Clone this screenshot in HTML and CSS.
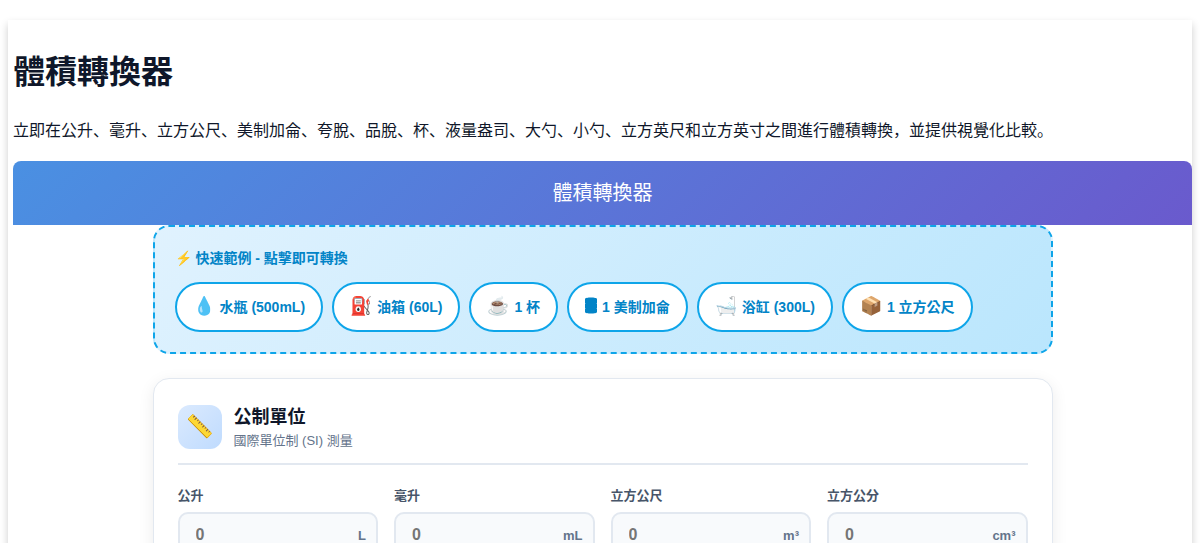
FILE: index.html
```html
<!DOCTYPE html>
<html lang="zh-TW">
<head>
<meta charset="utf-8">
<title>體積轉換器</title>
<link rel="stylesheet" href="styles.css">
</head>
<body>
<main class="page">
  <h1 class="page-title">體積轉換器</h1>
  <p class="intro">立即在公升、毫升、立方公尺、美制加侖、夸脫、品脫、杯、液量盎司、大勺、小勺、立方英尺和立方英寸之間進行體積轉換，並提供視覺化比較。</p>
  <div class="banner">體積轉換器</div>
  <div class="converter">
    <section class="examples">
      <h2 class="examples-title">⚡ 快速範例 - 點擊即可轉換</h2>
      <div class="chips">
        <button class="chip" type="button"><span class="chip-icon">💧</span>水瓶 (500mL)</button>
        <button class="chip" type="button"><span class="chip-icon">⛽</span>油箱 (60L)</button>
        <button class="chip" type="button"><span class="chip-icon">☕</span>1 杯</button>
        <button class="chip" type="button"><svg class="chip-drum" width="12" height="18" viewBox="0 0 12 18" aria-hidden="true"><path fill="currentColor" d="M0 2C0 0 12 0 12 2V6L11.500 6.500 12 7V11L11.500 11.500 12 12V15C12 17 0 17 0 15V12L.5 11.500 0 11V7L.5 6.500 0 6Z"/></svg>1 美制加侖</button>
        <button class="chip" type="button"><span class="chip-icon">🛁</span>浴缸 (300L)</button>
        <button class="chip" type="button"><span class="chip-icon">📦</span>1 立方公尺</button>
      </div>
    </section>
    <section class="card">
      <header class="card-header">
        <span class="card-icon">📏</span>
        <div>
          <h2 class="card-title">公制單位</h2>
          <p class="card-subtitle">國際單位制 (SI) 測量</p>
        </div>
      </header>
      <div class="fields">
        <div class="field">
          <label class="field-label" for="liter">公升</label>
          <div class="field-box"><input class="field-input" id="liter" type="number" placeholder="0"><span class="field-unit">L</span></div>
        </div>
        <div class="field">
          <label class="field-label" for="milliliter">毫升</label>
          <div class="field-box"><input class="field-input" id="milliliter" type="number" placeholder="0"><span class="field-unit">mL</span></div>
        </div>
        <div class="field">
          <label class="field-label" for="cubic-meter">立方公尺</label>
          <div class="field-box"><input class="field-input" id="cubic-meter" type="number" placeholder="0"><span class="field-unit">m³</span></div>
        </div>
        <div class="field">
          <label class="field-label" for="cubic-centimeter">立方公分</label>
          <div class="field-box"><input class="field-input" id="cubic-centimeter" type="number" placeholder="0"><span class="field-unit">cm³</span></div>
        </div>
      </div>
    </section>
  </div>
</main>
</body>
</html>
```
FILE: styles.css
```css
* {
  box-sizing: border-box;
}

body {
  margin: 0;
  padding: 20px 8px;
  background: #fff;
  color: #0f172a;
  font-family: "Liberation Sans", Arial, "Noto Sans CJK JP", sans-serif;
  font-feature-settings: "locl" 0;
  font-size: 16px;
}

.page {
  padding: 10px 0 24px 5px;
  background: #fff;
  box-shadow: 0 4px 8px rgba(0, 0, 0, 0.2);
}

.page-title {
  margin: 0 0 24px;
  padding-top: 20px;
  font-size: 32px;
  line-height: 44px;
}

.intro {
  margin: 0 0 17px;
  line-height: 26px;
}

.banner {
  padding: 16px;
  border-radius: 8px 8px 0 0;
  background: linear-gradient(135deg, #4a90e2, #6a5acd);
  color: #fff;
  font-size: 20px;
  line-height: 32px;
  text-align: center;
}

.converter {
  max-width: 900px;
  margin: 0 auto;
}

.examples {
  margin-bottom: 24px;
  padding: 20px;
  border: 2px dashed #0ea5e9;
  border-radius: 16px;
  background: linear-gradient(135deg, #e0f2fe, #bae6fd);
}

.examples-title {
  margin: 0 0 12px;
  color: #0284c7;
  font-size: 14px;
  line-height: 23px;
}

.chips {
  display: flex;
  flex-wrap: wrap;
  gap: 9px;
}

.chip {
  display: flex;
  align-items: center;
  gap: 5px;
  height: 50px;
  padding: 0 16px 2px;
  border: 2px solid #0ea5e9;
  border-radius: 25px;
  background: #fff;
  color: #0284c7;
  font-family: inherit;
  font-size: 14px;
  font-weight: bold;
}

.chip-icon {
  font-size: 18px;
}

.card {
  padding: 24px;
  border: 1px solid #e2e8f0;
  border-radius: 16px;
  background: #fff;
  box-shadow: 0 4px 16px rgba(0, 0, 0, 0.08);
}

.card-header {
  display: flex;
  align-items: center;
  gap: 12px;
  margin-bottom: 20px;
  padding-bottom: 12px;
  border-bottom: 2px solid #e2e8f0;
}

.card-icon {
  display: flex;
  align-items: center;
  justify-content: center;
  width: 44px;
  height: 44px;
  border-radius: 12px;
  background: linear-gradient(135deg, #dbeafe, #bfdbfe);
  font-size: 22px;
}

.card-title {
  margin: 0;
  font-size: 18px;
  line-height: 28px;
}

.card-subtitle {
  margin: 0;
  color: #64748b;
  font-size: 13px;
  line-height: 20px;
}

.fields {
  display: grid;
  grid-template-columns: repeat(4, minmax(0, 1fr));
  gap: 16px;
}

.field {
  display: flex;
  flex-direction: column;
  gap: 6px;
}

.field-label {
  color: #475569;
  font-size: 13px;
  font-weight: bold;
  line-height: 21px;
}

.field-box {
  display: flex;
  align-items: center;
  padding: 0 10px 0 16px;
  border: 2px solid #e2e8f0;
  border-radius: 10px;
  background: #f8fafc;
}

.field-input {
  flex: 1;
  min-width: 0;
  padding: 12px 0;
  border: 0;
  outline: 0;
  background: transparent;
  color: #0f172a;
  font-family: inherit;
  font-size: 16px;
  font-weight: bold;
  appearance: textfield;
}

.field-unit {
  color: #64748b;
  font-size: 13px;
  font-weight: bold;
}

@media (max-width: 700px) {
  .fields {
    grid-template-columns: repeat(2, minmax(0, 1fr));
  }
}
```
